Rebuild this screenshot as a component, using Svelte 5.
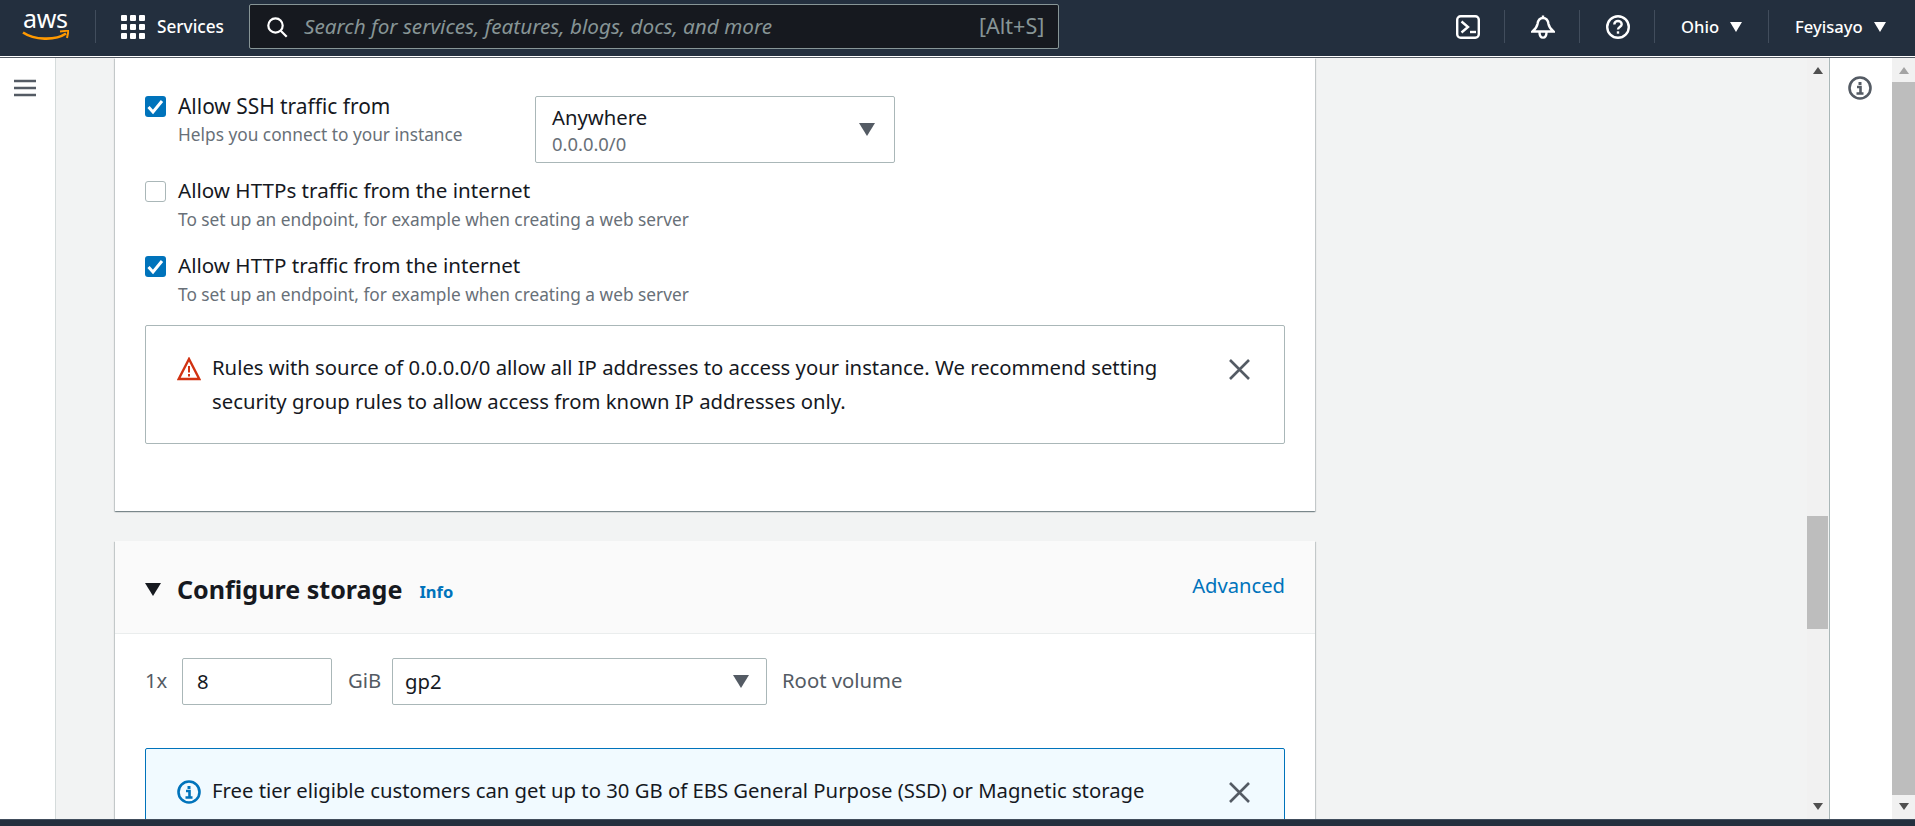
<script>
  const sub = 'To set up an endpoint, for example when creating a web server';
</script>

<div class="page">
  <header class="top">
    <div class="logo">
      <span class="aws">aws</span>
      <svg class="smile" viewBox="0 0 47 12" width="47" height="12"><path d="M1 2.500C12 10 33 11 44 3.500" fill="none" stroke="#f90" stroke-width="2.600"/><path d="M38 1.600 46.500 .6 45 8" fill="none" stroke="#f90" stroke-width="2"/></svg>
    </div>
    <span class="sep first"></span>
    <svg class="grid" viewBox="0 0 24 24" width="24" height="24" fill="#fff">
      {#each [0, 9, 18] as y}{#each [0, 9, 18] as x}<rect {x} {y} width="6" height="6" rx="1"/>{/each}{/each}
    </svg>
    <span class="services">Services</span>
    <div class="search">
      <svg viewBox="0 0 22 22" width="22" height="22" fill="none" stroke="#fff" stroke-width="2.200"><circle cx="9.500" cy="9.500" r="7.200"/><path d="m14.700 14.700 6 6"/></svg>
      <span class="ph">Search for services, features, blogs, docs, and more</span>
      <span class="alt">[Alt+S]</span>
    </div>
    <svg class="ic term" viewBox="0 0 24 24" width="24" height="24" fill="none" stroke="#fff" stroke-width="2.400"><rect x="1.200" y="1.200" width="21.600" height="21.600" rx="3.500"/><path d="m5.500 6.500 6.500 5.500-6.500 5.500"/><path d="M14 17h6"/></svg>
    <span class="sep s1"></span>
    <svg class="ic bell" viewBox="0 0 24 24" width="24" height="24" fill="none" stroke="#fff" stroke-width="2.400"><path d="M1.500 16.500h21c-3-2.500-4.500-4.500-5-7.500C17 5.500 15 3 12 3S7 5.500 6.500 9c-.5 3-2 5-5 7.500Z"/><path d="M12 .5V3"/><path d="M8.500 17c0 7.500 7 7.500 7 0"/></svg>
    <span class="sep s2"></span>
    <svg class="ic help" viewBox="0 0 24 24" width="24" height="24" fill="none" stroke="#fff" stroke-width="2.400"><circle cx="12" cy="12" r="10.800"/><path d="M8.300 9.500C8.300 7.500 10 6 12 6s3.700 1.400 3.700 3.300c0 2.700-3.700 2.700-3.700 5.200"/><path d="M12 16.300v2.400"/></svg>
    <span class="sep s3"></span>
    <span class="menu ohio">Ohio</span><span class="caret"></span>
    <span class="sep s4"></span>
    <span class="menu fey">Feyisayo</span><span class="caret"></span>
  </header>

  <div class="body">
    <nav class="nav">
      <svg viewBox="0 0 22 18" width="22" height="18" stroke="#545b64" stroke-width="2.700"><path d="M0 2h22M0 9h22M0 16h22"/></svg>
    </nav>

    <main class="main">
      <div class="content">
        <section class="card first-card">
          <div class="row-ssh">
            <div class="opt ssh">
              <span class="cb on"><svg viewBox="0 0 21 21"><path d="m3.500 11 4.500 5 9-11" fill="none" stroke="#fff" stroke-width="3"/></svg></span>
              <div><div class="lab ssh-lab">Allow SSH traffic from</div><div class="sub">Helps you connect to your instance</div></div>
            </div>
            <div class="drop">
              <div class="drop-main">Anywhere</div>
              <div class="drop-sub">0.0.0.0/0</div>
              <span class="tri"></span>
            </div>
          </div>
          <div class="opt">
            <span class="cb"></span>
            <div><div class="lab">Allow HTTPs traffic from the internet</div><div class="sub">{sub}</div></div>
          </div>
          <div class="opt">
            <span class="cb on"><svg viewBox="0 0 21 21"><path d="m3.500 11 4.500 5 9-11" fill="none" stroke="#fff" stroke-width="3"/></svg></span>
            <div><div class="lab">Allow HTTP traffic from the internet</div><div class="sub">{sub}</div></div>
          </div>
          <div class="alert warn">
            <svg class="a-ic" viewBox="0 0 24 24" width="24" height="24" fill="none" stroke="#d13212" stroke-width="2.400"><path d="M12 2 1.700 22h20.600Z" stroke-linejoin="miter"/><path d="M12 9v6.500M12 17v2.500" stroke-width="2"/></svg>
            <p>Rules with source of 0.0.0.0/0 allow all IP addresses to access your instance. We recommend setting security group rules to allow access from known IP addresses only.</p>
            <svg class="x" viewBox="0 0 21 21" width="21" height="21" stroke="#545b64" stroke-width="2.600"><path d="m1 1 19 19M20 1 1 20"/></svg>
          </div>
        </section>

        <section class="card second">
          <div class="card-head">
            <span class="tri-h"></span>
            <h2>Configure storage</h2>
            <span class="info">Info</span>
            <span class="adv">Advanced</span>
          </div>
          <div class="card-body">
            <div class="vol">
              <span class="t-1x">1x</span>
              <div class="field num">8</div>
              <span class="t-gib">GiB</span>
              <div class="field sel">gp2<span class="tri"></span></div>
              <span class="t-root">Root volume</span>
            </div>
            <div class="alert tip">
              <svg class="a-ic" viewBox="0 0 24 24" width="24" height="24" fill="none" stroke="#0073bb" stroke-width="2.600"><circle cx="12" cy="12" r="10.500"/><path d="M12 6v3" stroke-width="3"/><path d="M9 11h3.500v6.500M8.500 17.500h7"/></svg>
              <p>Free tier eligible customers can get up to 30 GB of EBS General Purpose (SSD) or Magnetic storage</p>
              <svg class="x" viewBox="0 0 21 21" width="21" height="21" stroke="#545b64" stroke-width="2.600"><path d="m1 1 19 19M20 1 1 20"/></svg>
            </div>
          </div>
        </section>
      </div>
      <div class="sb inner">
        <span class="up"></span>
        <div class="track"><div class="thumb"></div></div>
        <span class="dn"></span>
      </div>
    </main>

    <aside class="side">
      <svg class="side-ic" viewBox="0 0 24 24" width="24" height="24" fill="none" stroke="#545b64" stroke-width="2.600"><circle cx="12" cy="12" r="10.500"/><path d="M12 6v3" stroke-width="3"/><path d="M9 11h3.500v6.500M8.500 17.500h7"/></svg>
      <div class="sb outer">
        <span class="up faded"></span>
        <div class="track"><div class="thumb"></div></div>
        <span class="dn"></span>
      </div>
    </aside>
  </div>
  <div class="foot"></div>
</div>

<style>
  :global(body) { margin: 0; }
  .page {
    width: 1915px; height: 826px; display: flex; flex-direction: column; overflow: hidden;
    font-family: "Noto Sans", "Open Sans", sans-serif; color: #16191f; background: #fff;
  }
  .top {
    height: 53px; padding-bottom: 3px; flex: none; display: flex; align-items: center; background: #232f3e; color: #fff;
    border-bottom: 1px solid #fff; box-shadow: 0 1px 0 #545b64; position: relative; z-index: 2;
    box-sizing: content-box;
  }
  .logo { width: 47px; margin-left: 22px; height: 30px; position: relative; }
  .aws { position: absolute; left: 1px; top: -9px; font: 400 25px/30px "Noto Sans", sans-serif; letter-spacing: -0.3px; }
  .smile { position: absolute; left: 0; top: 18px; }
  .sep { width: 1px; height: 33px; background: #414d5c; flex: none; }
  .sep.first { margin-left: 26px; }
  .grid { margin-left: 25px; flex: none; }
  .services { margin-left: 12px; width: 67px; font-size: 17.200px; font-weight: 500; white-space: nowrap; }
  .search {
    margin-left: 25px; width: 810px; height: 45px; box-sizing: border-box; display: flex; align-items: center;
    background: #16191f; border: 1px solid #879596; border-radius: 2px; flex: none; padding-left: 16px;
  }
  .ph { margin: 0 0 2px 16px; color: #879596; font-style: italic; font-size: 20.700px; white-space: nowrap; width: 675px; }
  .alt { margin-bottom: 2px; color: #879596; font-size: 21.500px; white-space: nowrap; }
  .ic { flex: none; }
  .term { margin-left: 397px; }
  .s1 { margin-left: 24px; }
  .bell { margin-left: 26px; }
  .s2 { margin-left: 24px; }
  .help { margin-left: 26px; }
  .s3 { margin-left: 24px; }
  .menu { font-size: 16.600px; font-weight: 500; white-space: nowrap; }
  .ohio { margin-left: 26px; width: 39px; }
  .caret {
    width: 0; height: 0; margin-left: 10px; flex: none;
    border-left: 6px solid transparent; border-right: 6px solid transparent; border-top: 10px solid #fff;
  }
  .s4 { margin-left: 26px; }
  .fey { margin-left: 26px; width: 69px; }

  .body { flex: 1; display: flex; min-height: 0; margin-top: 1px; }
  .nav { width: 55px; flex: none; border-right: 1px solid #d5dbdb; box-sizing: content-box; padding-top: 21px; text-align: center; }
  .nav svg { display: block; margin-left: 14px; }
  .main { flex: none; width: 1773px; display: flex; background: #f2f3f3; border-right: 1px solid #aab7b8; overflow: hidden; }
  .content { width: 1751px; padding-left: 59px; box-sizing: border-box; overflow: hidden; }
  .card {
    width: 1200px; box-sizing: border-box; background: #fff;
    box-shadow: 0 1px 1px 0 rgba(0,28,36,.3), 1px 1px 1px 0 rgba(0,28,36,.15), -1px 1px 1px 0 rgba(0,28,36,.15);
  }
  .first-card { padding: 34px 30px 67px; height: 453px; }
  .second { margin-top: 30px; height: 400px; }
  .row-ssh { display: flex; height: 85px; }
  .row-ssh .ssh { width: 390px; height: auto; margin: 0; }
  .opt { display: flex; height: 56px; margin-bottom: 19px; }
  .opt:has(+ .warn) { margin-bottom: 17px; }
  .cb {
    width: 21px; height: 21px; box-sizing: border-box; flex: none; margin-top: 4px; margin-right: 12px;
    border: 1.500px solid #aab7b8; border-radius: 3px; background: #fff;
  }
  .cb.on { background: #0073bb; border: 0; }
  .cb svg { display: block; width: 21px; height: 21px; }
  .lab { font-size: 20.600px; line-height: 26px; white-space: nowrap; }
  .ssh-lab { font-size: 20.900px; line-height: 28px; margin-bottom: -2px; }
  .sub { margin-top: 2px; font-size: 17.300px; line-height: 30px; color: #687078; white-space: nowrap; }
  .drop {
    width: 360px; height: 67px; margin-top: 4px; box-sizing: border-box; position: relative;
    border: 1px solid #aab7b8; border-radius: 2px; padding: 5px 0 0 16px;
  }
  .drop-main { font-size: 20.300px; line-height: 30px; }
  .drop-sub { font-size: 18.400px; line-height: 24px; color: #687078; }
  .tri {
    position: absolute; right: 19px; top: 26px; width: 0; height: 0;
    border-left: 8px solid transparent; border-right: 8px solid transparent; border-top: 13px solid #545b64;
  }
  .alert { display: flex; box-sizing: border-box; width: 1140px; border-radius: 2px; }
  .alert p { margin: 0; font-size: 20.300px; line-height: 34px; flex: none; width: 980px; }
  .a-ic { flex: none; margin: 7px 11px 0 0; }
  .x { flex: none; margin: 9px 0 0 37px; }
  .warn { height: 119px; border: 1px solid #aab7b8; padding: 24px 0 0 31px; }
  .card-head {
    height: 93px; box-sizing: border-box; background: #fafafa; border-bottom: 1px solid #eaeded;
    display: flex; padding: 0 30px; position: relative;
  }
  .tri-h {
    width: 0; height: 0; margin-top: 42px; flex: none;
    border-left: 8px solid transparent; border-right: 8px solid transparent; border-top: 13px solid #16191f;
  }
  h2 { margin: 29px 0 0 16px; font-size: 25.100px; line-height: 38px; font-weight: 700; white-space: nowrap; }
  .info { margin: 37px 0 0 17px; font-size: 16.500px; line-height: 28px; font-weight: 700; color: #0073bb; }
  .adv { margin: 28px 0 0 auto; font-size: 20.200px; line-height: 32px; color: #0073bb; }
  .card-body { padding: 24px 30px 0; }
  .vol { display: flex; align-items: center; height: 47px; font-size: 20.300px; }
  .t-1x { width: 37px; margin-bottom: 3px; color: #545b64; }
  .t-gib { width: 44px; margin: 0 0 3px 16px; color: #545b64; white-space: nowrap; }
  .t-root { margin: 0 0 3px 15px; color: #545b64; white-space: nowrap; }
  .field {
    height: 47px; box-sizing: border-box; border: 1px solid #aab7b8; border-radius: 2px; position: relative;
    line-height: 45px;
  }
  .num { width: 150px; padding-left: 14px; }
  .sel { width: 375px; padding-left: 12px; }
  .sel .tri { top: 16px; right: 17px; }
  .tip { margin-top: 43px; height: 120px; background: #f1faff; border: 1px solid #0073bb; padding: 24px 0 0 31px; }

  .sb { flex: none; display: flex; flex-direction: column; align-items: center; background: #f1f1f1; position: relative; }
  .inner { width: 21px; margin-right: 1px; }
  .outer { width: 23px; }
  .up, .dn { width: 0; height: 0; flex: none; border-left: 5px solid transparent; border-right: 5px solid transparent; }
  .up { border-bottom: 7px solid #505050; margin: 9px 0 8px; }
  .up.faded { border-bottom-color: #a3a3a3; }
  .dn { border-top: 7px solid #505050; margin: 8px 0 9px; }
  .track { flex: 1; width: 100%; position: relative; }
  .thumb { background: #bdbdbd; position: absolute; left: 0; right: 0; }
  .inner .thumb { top: 434px; height: 113px; }
  .outer .thumb { top: 0; bottom: 0; }

  .side { flex: 1; display: flex; justify-content: space-between; background: #fff; min-width: 0; }
  .side-ic { margin: 18px 0 0 18px; flex: none; }
  .foot { height: 7px; flex: none; background: #232f3e; border-top: 1px solid #414d5c; box-sizing: border-box; }
</style>
